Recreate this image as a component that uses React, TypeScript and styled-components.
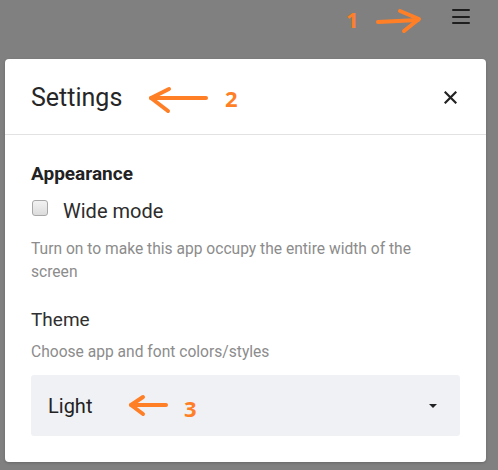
import React from "react";
import styled, { createGlobalStyle } from "styled-components";

const Global = createGlobalStyle`
  html, body { margin: 0; padding: 0; background: #808080; }
  body { font-family: Roboto, "Noto Sans", Arial, sans-serif; width: 498px; height: 470px; overflow: hidden; position: relative; }
`;

const Page = styled.div`
  position: relative;
  width: 498px;
  height: 470px;
  background: #808080;
`;

const TopBar = styled.div`
  height: 59px;
  display: flex;
  justify-content: flex-end;
  align-items: flex-start;
  padding: 8px 28px 0 0;
  box-sizing: border-box;
`;

const MenuButton = styled.div`
  width: 18px;
  height: 16px;
  display: flex;
  flex-direction: column;
  justify-content: space-between;
  padding-top: 1px;
  box-sizing: border-box;
`;

const MenuLine = styled.span`
  display: block;
  height: 2px;
  background: #1e1e1e;
  border-radius: 1px;
`;

const Dialog = styled.div`
  margin-left: 5px;
  width: 481px;
  height: 403px;
  background: #fff;
  border-radius: 4px;
  box-shadow: 0 1px 3px rgba(0, 0, 0, 0.2);
  display: flex;
  flex-direction: column;
`;

const Header = styled.div`
  height: 77px;
  display: flex;
  align-items: center;
  justify-content: space-between;
  padding: 0 29px 0 26px;
  border-bottom: 1px solid #e2e2e4;
  box-sizing: border-box;
`;

const Title = styled.h2`
  margin: 0;
  font-size: 25px;
  font-weight: 400;
  color: #262626;
  line-height: 30px;
  padding-top: 3px;
`;

const Close = styled.svg`
  width: 13px;
  height: 13px;
  margin-top: 2px;
`;

const Body = styled.div`
  padding: 27px 26px 26px 26px;
  display: flex;
  flex-direction: column;
`;

const SectionTitle = styled.div<{ $bold?: boolean }>`
  font-size: 19px;
  line-height: 24px;
  font-weight: ${(p) => (p.$bold ? 700 : 400)};
  color: ${(p) => (p.$bold ? "#222" : "#303030")};
`;

const CheckRow = styled.label`
  display: flex;
  align-items: flex-start;
  margin-top: 13px;
  gap: 15px;
`;

const Box = styled.span`
  width: 14px;
  height: 14px;
  margin-top: 1px;
  margin-left: 1px;
  border: 1px solid #a8a8a8;
  border-radius: 3px;
  background: linear-gradient(#f2f2f2, #dcdcdc);
`;

const CheckText = styled.span`
  font-size: 20px;
  line-height: 24px;
  color: #2c2c2c;
`;

const Help = styled.p<{ $mt: number }>`
  margin: ${(p) => p.$mt}px 0 0;
  font-size: 15.6px;
  line-height: 23px;
  color: #8c8c8c;
  max-width: 400px;
`;

const Spacer = styled.div<{ $h: number }>`
  height: ${(p) => p.$h}px;
`;

const Select = styled.div`
  margin-top: 11px;
  width: 429px;
  height: 61px;
  background: #f0f1f5;
  border-radius: 3px;
  display: flex;
  align-items: center;
  justify-content: space-between;
  padding: 0 23px 0 17px;
  box-sizing: border-box;
`;

const SelectValue = styled.span`
  font-size: 20px;
  color: #222;
`;

const Caret = styled.span`
  width: 0;
  height: 0;
  border-left: 4px solid transparent;
  border-right: 4px solid transparent;
  border-top: 4px solid #222;
  margin-top: 1px;
`;

const Overlay = styled.svg`
  position: absolute;
  left: 0;
  top: 0;
  width: 498px;
  height: 470px;
  pointer-events: none;
`;

const orange = "#ff7f27";

export default function App() {
  return (
    <Page>
      <Global />
      <TopBar>
        <MenuButton>
          <MenuLine />
          <MenuLine />
          <MenuLine />
        </MenuButton>
      </TopBar>
      <Dialog>
        <Header>
          <Title>Settings</Title>
          <Close viewBox="0 0 13 13">
            <path d="M1.5 1.5 L11.5 11.5 M11.5 1.5 L1.5 11.5" stroke="#222" strokeWidth="2.2" strokeLinecap="square" />
          </Close>
        </Header>
        <Body>
          <SectionTitle $bold>Appearance</SectionTitle>
          <CheckRow>
            <Box />
            <CheckText>Wide mode</CheckText>
          </CheckRow>
          <Help $mt={15}>Turn on to make this app occupy the entire width of the screen</Help>
          <Spacer $h={24} />
          <SectionTitle>Theme</SectionTitle>
          <Help $mt={9}>Choose app and font colors/styles</Help>
          <Select>
            <SelectValue>Light</SelectValue>
            <Caret />
          </Select>
        </Body>
      </Dialog>
      <Overlay viewBox="0 0 498 470">
        <g stroke={orange} strokeWidth="4" strokeLinecap="round" strokeLinejoin="round" fill="none">
          <path d="M378 22 L418 20" />
          <path d="M400 11 L419 19 L404 31" />
          <path d="M206 98 L151 98" />
          <path d="M169 89 L151 98 L168 111" />
          <path d="M166 405 L131 405" />
          <path d="M143 397 L131 405 L143 414" />
        </g>
        <g fill={orange} fontFamily="'Open Sans', 'DejaVu Sans', sans-serif" fontWeight="700" fontSize="22">
          <text x="346" y="28">1</text>
          <text x="225" y="107">2</text>
          <text x="184" y="417">3</text>
        </g>
      </Overlay>
    </Page>
  );
}
